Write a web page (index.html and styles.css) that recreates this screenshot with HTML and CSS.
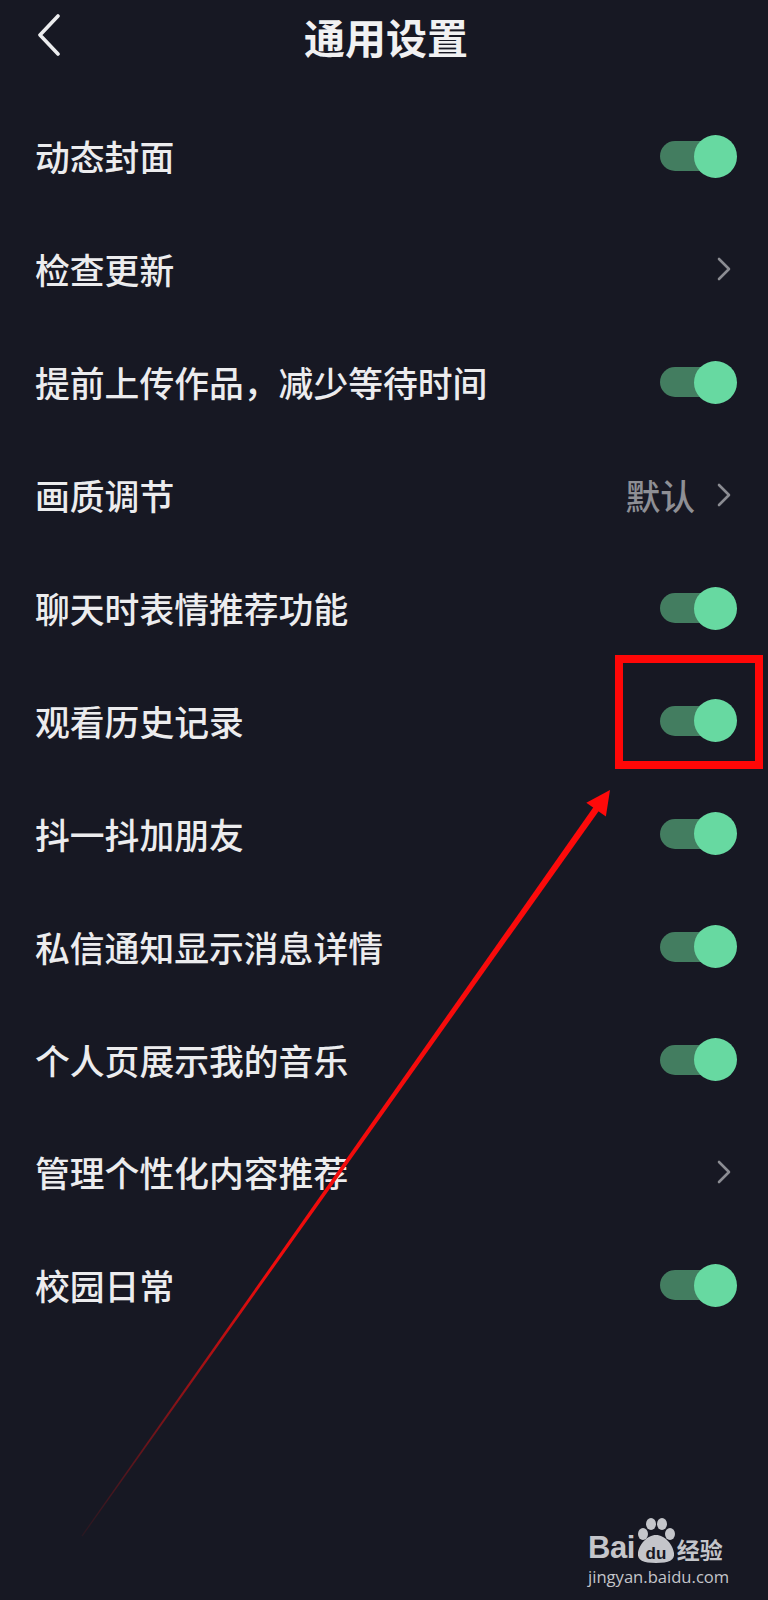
FILE: index.html
```html
<!DOCTYPE html>
<html lang="zh-CN">
<head>
<meta charset="utf-8">
<title>通用设置</title>
<link rel="stylesheet" href="styles.css">
</head>
<body>
<div class="page">
  <header class="topbar">
    <svg class="back" width="30" height="44" viewBox="0 0 30 44"><path d="M22 4 L4 23 L22 42" fill="none" stroke="#ececee" stroke-width="3.6" stroke-linecap="round" stroke-linejoin="round"/></svg>
    <h1 class="title">通用设置</h1>
  </header>
  <ul class="list">
    <li class="row"><span class="label">动态封面</span><span class="switch"></span></li>
    <li class="row"><span class="label">检查更新</span><span class="more"><svg class="chev" width="14" height="24" viewBox="0 0 14 24"><path d="M2 2 L12 12 L2 22" fill="none" stroke="#8b8c92" stroke-width="2.6" stroke-linecap="round" stroke-linejoin="round"/></svg></span></li>
    <li class="row"><span class="label">提前上传作品，减少等待时间</span><span class="switch"></span></li>
    <li class="row"><span class="label">画质调节</span><span class="more"><span class="value">默认</span><svg class="chev" width="14" height="24" viewBox="0 0 14 24"><path d="M2 2 L12 12 L2 22" fill="none" stroke="#8b8c92" stroke-width="2.6" stroke-linecap="round" stroke-linejoin="round"/></svg></span></li>
    <li class="row"><span class="label">聊天时表情推荐功能</span><span class="switch"></span></li>
    <li class="row"><span class="label">观看历史记录</span><span class="switch"></span></li>
    <li class="row"><span class="label">抖一抖加朋友</span><span class="switch"></span></li>
    <li class="row"><span class="label">私信通知显示消息详情</span><span class="switch"></span></li>
    <li class="row"><span class="label">个人页展示我的音乐</span><span class="switch"></span></li>
    <li class="row"><span class="label">管理个性化内容推荐</span><span class="more"><svg class="chev" width="14" height="24" viewBox="0 0 14 24"><path d="M2 2 L12 12 L2 22" fill="none" stroke="#8b8c92" stroke-width="2.6" stroke-linecap="round" stroke-linejoin="round"/></svg></span></li>
    <li class="row"><span class="label">校园日常</span><span class="switch"></span></li>
  </ul>

  <div class="highlight"></div>

  <svg class="arrow" width="768" height="1600" viewBox="0 0 768 1600">
    <defs>
      <linearGradient id="fade" x1="610" y1="790" x2="82" y2="1536" gradientUnits="userSpaceOnUse">
        <stop offset="0" stop-color="#ff0a0a"/>
        <stop offset="0.65" stop-color="#ee0c0c"/>
        <stop offset="1" stop-color="#d01010" stop-opacity="0.1"/>
      </linearGradient>
    </defs>
    <polygon points="600.9,807.9 595.7,804.1 81.6,1535.6 82.4,1536.4" fill="url(#fade)"/>
    <polygon points="610,790 586.3,802.7 605.9,816.5" fill="#ff0a0a"/>
  </svg>

  <div class="watermark">
    <div class="wm-top">
      <span class="wm-bai">Bai</span>
      <svg class="wm-paw" width="42" height="46" viewBox="0 0 42 46">
        <ellipse cx="8" cy="17" rx="5" ry="6" fill="#c4c5ca"/>
        <ellipse cx="16" cy="7" rx="5" ry="6" fill="#c4c5ca"/>
        <ellipse cx="27" cy="7" rx="5" ry="6" fill="#c4c5ca"/>
        <ellipse cx="35" cy="17" rx="5" ry="6" fill="#c4c5ca"/>
        <path d="M21 18 C30 18 38 28 39 36 C40 43 34 46 21 46 C8 46 2 43 3 36 C4 28 12 18 21 18 Z" fill="#c4c5ca"/>
        <text x="21" y="42" text-anchor="middle" class="wm-du">du</text>
      </svg>
      <span class="wm-jy">经验</span>
    </div>
    <div class="wm-url">jingyan.baidu.com</div>
  </div>
</div>
</body>
</html>
```

FILE: styles.css
```css
* {
  box-sizing: border-box;
}

html, body {
  margin: 0;
  padding: 0;
  background: #171823;
}

body {
  font-family: "Noto Sans CJK SC", "Noto Sans", sans-serif;
  color: #ececee;
}

.page {
  position: relative;
  width: 768px;
  height: 1600px;
  overflow: hidden;
  background: #171823;
}

.topbar {
  height: 100px;
  display: flex;
  align-items: flex-start;
  justify-content: center;
  position: relative;
}

.back {
  position: absolute;
  left: 36px;
  top: 12px;
}

.title {
  margin: 0;
  margin-top: 6px;
  margin-left: 4px;
  font-size: 41px;
  line-height: 60px;
  font-weight: 700;
  color: #f1f1f2;
  letter-spacing: 0;
}

.list {
  list-style: none;
  margin: 0;
  padding: 0;
}

.row {
  height: 112.9px;
  display: flex;
  align-items: center;
  justify-content: space-between;
  padding: 0 31px 0 35px;
}

.label {
  font-size: 34.8px;
  line-height: 40px;
  color: #ececee;
  font-weight: 500;
}

.switch {
  position: relative;
  width: 77px;
  height: 43px;
  display: block;
}

.switch::before {
  content: "";
  position: absolute;
  left: 0;
  top: 6.5px;
  width: 66px;
  height: 30px;
  border-radius: 15px;
  background: #437d60;
}

.switch::after {
  content: "";
  position: absolute;
  right: 0;
  top: 0;
  width: 43px;
  height: 43px;
  border-radius: 50%;
  background: #67d9a1;
}

.more {
  display: flex;
  align-items: center;
  gap: 22px;
  padding-right: 6px;
}

.value {
  font-size: 34.8px;
  line-height: 40px;
  color: #8e8f95;
  font-weight: 500;
}

.chev {
  display: block;
}

.highlight {
  position: absolute;
  left: 615px;
  top: 655px;
  width: 148px;
  height: 114px;
  border: 8px solid #ff0707;
}

.arrow {
  position: absolute;
  left: 0;
  top: 0;
  pointer-events: none;
}

.watermark {
  position: absolute;
  left: 588px;
  top: 1516px;
  width: 140px;
  color: #c4c5ca;
}

.wm-top {
  display: flex;
  align-items: flex-end;
  height: 48px;
}

.wm-bai {
  font-family: "Liberation Sans", Arial, sans-serif;
  font-weight: 700;
  font-size: 31px;
  line-height: 30px;
  letter-spacing: -0.5px;
  margin-bottom: 1px;
}

.wm-paw {
  display: block;
  margin-left: 0;
  margin-bottom: 1px;
}

.wm-du {
  font-family: "Liberation Sans", Arial, sans-serif;
  font-size: 17px;
  font-weight: 700;
  fill: #171823;
}

.wm-jy {
  font-size: 23px;
  font-weight: 700;
  line-height: 28px;
  margin-left: 0;
  margin-bottom: 1px;
}

.wm-url {
  font-family: "Open Sans", "Noto Sans", sans-serif;
  font-size: 16.6px;
  line-height: 22px;
  letter-spacing: 0;
  margin-top: 2px;
}
```
